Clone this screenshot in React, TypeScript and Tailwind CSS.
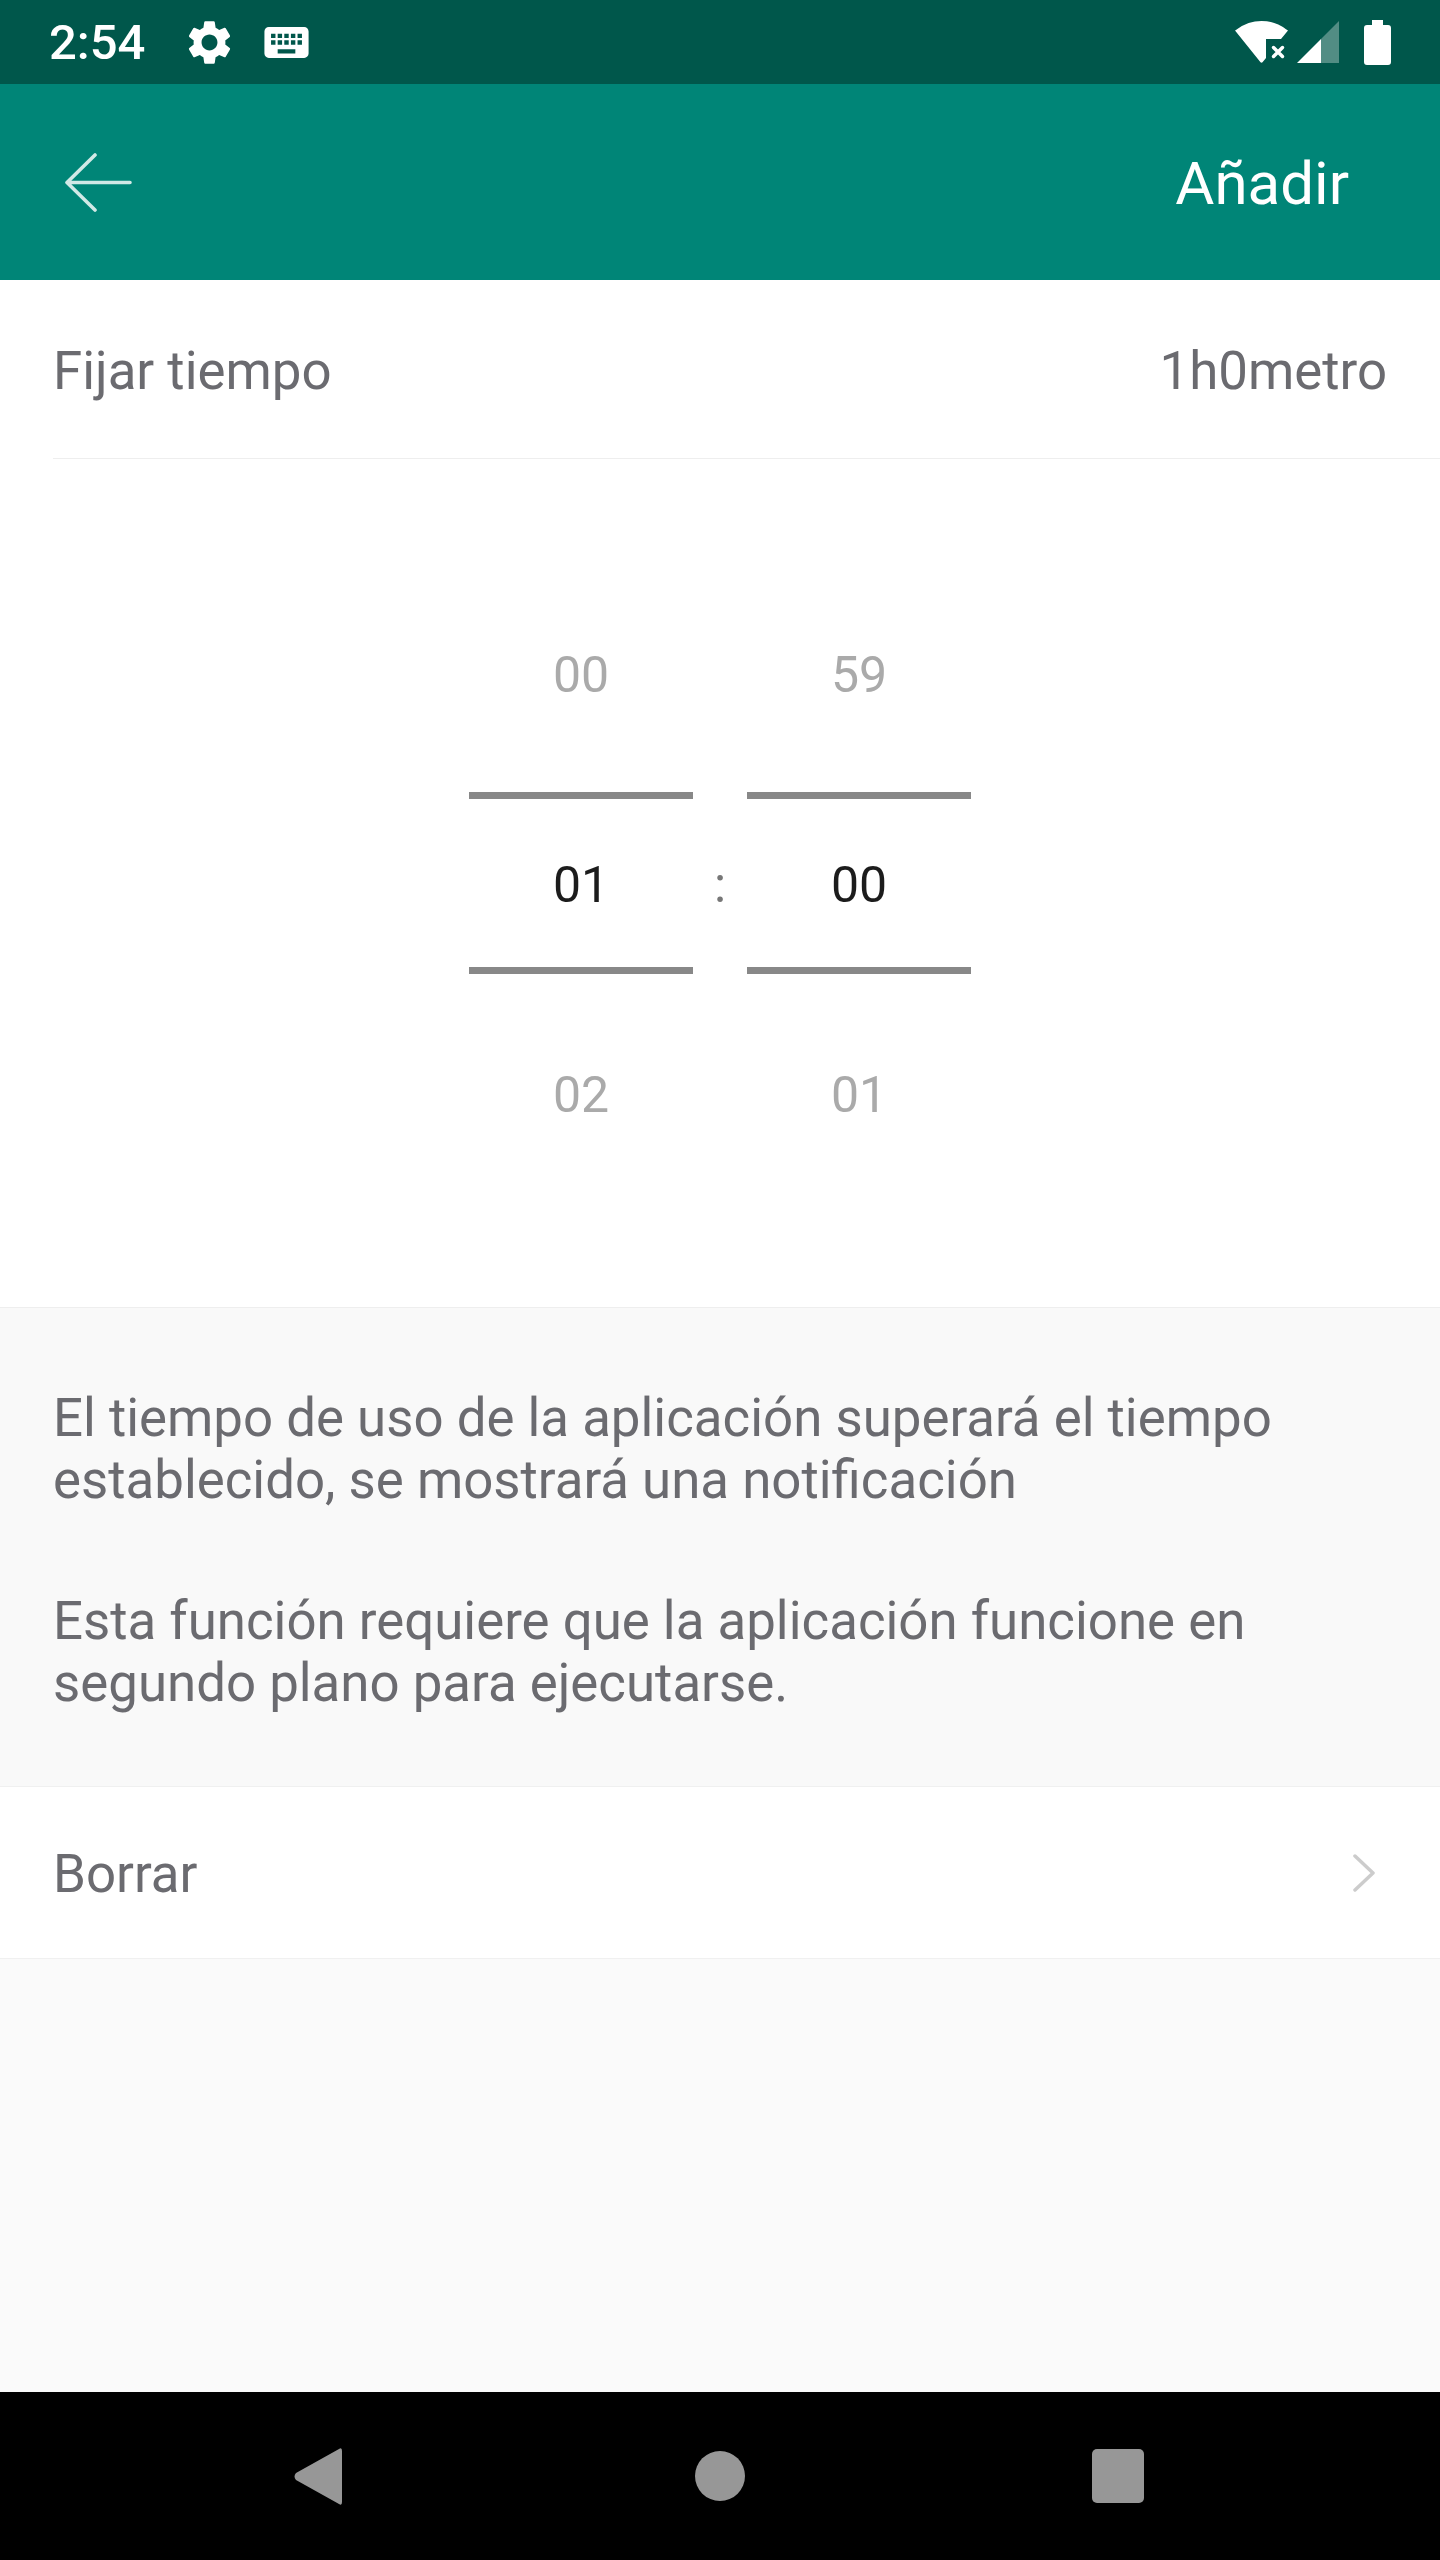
const font = { fontFamily: 'Roboto, sans-serif' }

function StatusBar() {
  return (
    <div className="flex h-[84px] items-center bg-[#00574b] pl-[49px] pr-[49px] text-white">
      <span className="text-[49px] font-medium leading-none">2:54</span>
      <svg className="ml-[38px]" width="53" height="53" viewBox="0 0 24 24" fill="#fff">
        <path d="M19.14 12.94c.04-.3.06-.61.06-.94 0-.32-.02-.64-.07-.94l2.03-1.58c.18-.14.23-.41.12-.61l-1.92-3.32c-.12-.22-.37-.29-.59-.22l-2.39.96c-.5-.38-1.03-.7-1.62-.94l-.36-2.54c-.04-.24-.24-.41-.48-.41h-3.84c-.24 0-.43.17-.47.41l-.36 2.54c-.59.24-1.13.57-1.62.94l-2.39-.96c-.22-.08-.47 0-.59.22L2.74 8.87c-.12.21-.08.47.12.61l2.03 1.58c-.05.3-.09.63-.09.94s.02.64.07.94l-2.03 1.58c-.18.14-.23.41-.12.61l1.92 3.32c.12.22.37.29.59.22l2.39-.96c.5.38 1.03.7 1.62.94l.36 2.54c.05.24.24.41.48.41h3.84c.24 0 .44-.17.47-.41l.36-2.54c.59-.24 1.13-.56 1.62-.94l2.39.96c.22.08.47 0 .59-.22l1.92-3.32c.12-.22.07-.47-.12-.61l-2.01-1.58zM12 15.6c-1.98 0-3.6-1.62-3.6-3.6s1.62-3.6 3.6-3.6 3.6 1.62 3.6 3.6-1.62 3.6-3.6 3.6z" />
      </svg>
      <svg className="ml-[24px]" width="53" height="53" viewBox="0 0 24 24" fill="#fff">
        <path d="M20 5H4c-1.1 0-1.99.9-1.99 2L2 17c0 1.1.9 2 2 2h16c1.1 0 2-.9 2-2V7c0-1.1-.9-2-2-2zm-9 3h2v2h-2V8zm0 3h2v2h-2v-2zM8 8h2v2H8V8zm0 3h2v2H8v-2zm-1 2H5v-2h2v2zm0-3H5V8h2v2zm9 7H8v-2h8v2zm0-4h-2v-2h2v2zm0-3h-2V8h2v2zm3 3h-2v-2h2v2zm0-3h-2V8h2v2z" />
      </svg>
      <div className="flex-1" />
      <svg width="53" height="42" viewBox="0 0 53 42" fill="#fff">
        <path d="M0 9.5Q1 9 2 8.300Q13 0 26.500 0Q40 0 51 8.300L53 9.500L46 18H31V37L27.500 41.300Q26.500 42 25.500 41.300Z" />
        <path d="M38.500 26.500L47.500 35.500M47.500 26.500L38.500 35.500" stroke="#fff" strokeWidth="3.500" strokeLinecap="round" />
      </svg>
      <svg className="ml-[9px]" width="42" height="42" viewBox="0 0 42 42" fill="#fff">
        <path d="M0 42L24 18V42Z" />
        <path d="M24 18L42 0V42H24Z" opacity="0.32" />
      </svg>
      <svg className="ml-[25px]" width="27" height="45" viewBox="0 0 27 45" fill="#fff">
        <path d="M8 0H19V5H24Q27 5 27 8V42Q27 45 24 45H3Q0 45 0 42V8Q0 5 3 5H8Z" />
      </svg>
    </div>
  )
}

function Toolbar() {
  return (
    <div className="flex h-[196px] items-center justify-between bg-[#008577] pl-[65px] pr-[91px]">
      <svg width="67" height="59" viewBox="0 0 67 59" fill="none" stroke="#fff" strokeOpacity="0.82" strokeWidth="3.600" strokeLinecap="round" strokeLinejoin="round">
        <path d="M65 29.500H2M30 2L2 29.500L30 57" />
      </svg>
      <span className="pt-[3px] text-[60px] leading-none text-white">Añadir</span>
    </div>
  )
}

function PickerColumn({ top, value, bottom }: { top: string; value: string; bottom: string }) {
  return (
    <div className="flex w-[224px] flex-col items-center text-[50px]">
      <div className="mb-[87px] flex h-[60px] items-center text-[#aaaaaa]">{top}</div>
      <div className="h-[7px] w-full bg-[#888888]" />
      <div className="flex h-[168px] items-center pt-[4px] text-[#1c1c1c]">{value}</div>
      <div className="h-[7px] w-full bg-[#888888]" />
      <div className="mt-[91px] flex h-[60px] items-center text-[#aaaaaa]">{bottom}</div>
    </div>
  )
}

export default function App() {
  return (
    <div className="flex h-[2560px] w-[1440px] flex-col bg-[#fafafa]" style={font}>
      <StatusBar />
      <Toolbar />

      <div className="bg-white pl-[53px]">
        <div className="flex h-[179px] items-center justify-between border-b border-[#eeeeee] pr-[53px] pt-[5px] text-[52.800px] text-[#6b6b70]">
          <span>Fijar tiempo</span>
          <span>1h0metro</span>
        </div>
      </div>

      <div className="flex h-[849px] justify-center border-b border-[#eeeeee] bg-white pt-[186px]">
        <PickerColumn top="00" value="01" bottom="02" />
        <div className="flex h-[480px] w-[54px] items-center justify-center text-[50px] text-[#777777]">:</div>
        <PickerColumn top="59" value="00" bottom="01" />
      </div>

      <div className="flex h-[478px] flex-col gap-[79px] bg-[#f9f9f9] px-[53px] pt-[79px] text-[52.800px] leading-[62px] text-[#6b6b70]">
        <p>El tiempo de uso de la aplicación superará el tiempo establecido, se mostrará una notificación</p>
        <p>Esta función requiere que la aplicación funcione en segundo plano para ejecutarse.</p>
      </div>

      <div className="flex h-[173px] items-center justify-between border-y border-[#f0f0f0] bg-white pl-[53px] pr-[65px] text-[52.800px] text-[#6b6b70]">
        <span className="pt-[5px]">Borrar</span>
        <svg width="22" height="38" viewBox="0 0 22 38" fill="none" stroke="#cccccc" strokeWidth="3.500" strokeLinecap="round" strokeLinejoin="round">
          <path d="M2 2L20 19L2 36" />
        </svg>
      </div>

      <div className="flex-1" />

      <div className="relative h-[168px] bg-black">
        <div className="flex h-full items-center justify-center pr-[2px]">
          <svg width="48" height="57" viewBox="0 0 48 57" fill="#979797">
            <path d="M45 1Q48 -1 48 3V54Q48 58 45 56L2 32Q-1 28.500 2 25Z" />
          </svg>
          <div className="ml-[353px] h-[50px] w-[50px] rounded-full bg-[#979797]" />
          <div className="ml-[347px] h-[54px] w-[52px] rounded-[5px] bg-[#979797]" />
        </div>
      </div>
    </div>
  )
}
